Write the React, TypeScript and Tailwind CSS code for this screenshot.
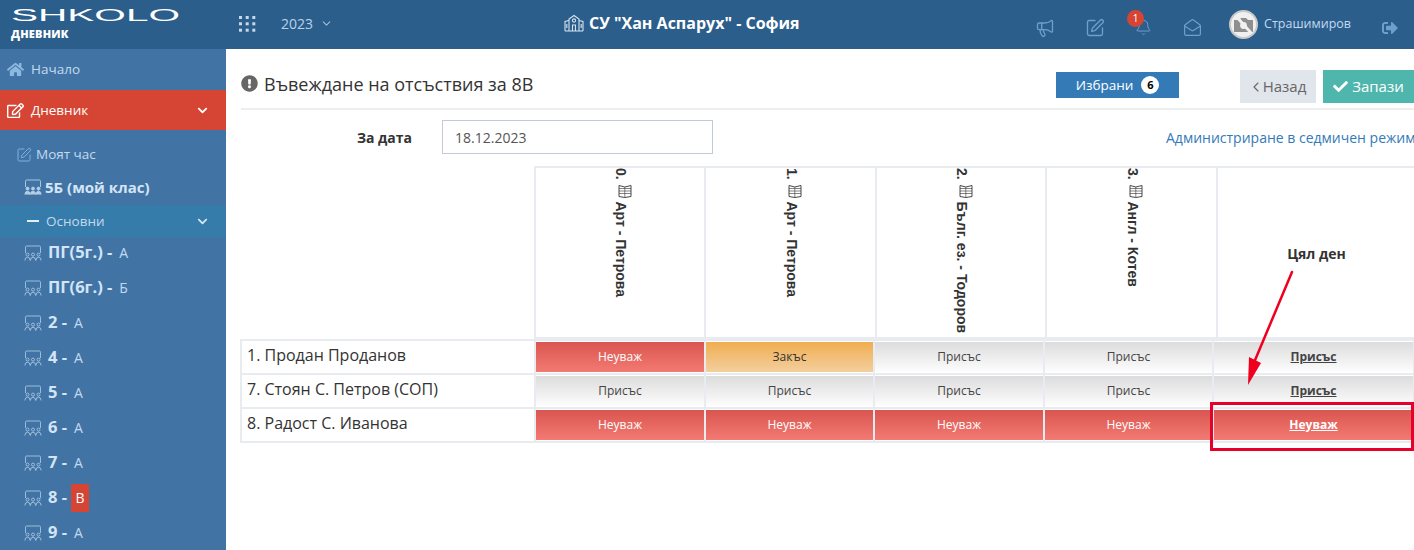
import { Bell, ChevronDown, ChevronLeft, MailOpen, Megaphone, SquarePen } from 'lucide-react';
import { FaCheck, FaChevronDown, FaExclamationCircle, FaHome, FaRegEdit, FaSignOutAlt } from 'react-icons/fa';

type Status = 'absent' | 'late' | 'present';

const classes = [
  { name: 'ПГ(5г.) -', letter: 'А' },
  { name: 'ПГ(6г.) -', letter: 'Б' },
  { name: '2 -', letter: 'А' },
  { name: '4 -', letter: 'А' },
  { name: '5 -', letter: 'А' },
  { name: '6 -', letter: 'А' },
  { name: '7 -', letter: 'А' },
  { name: '8 -', letter: 'В', active: true },
  { name: '9 -', letter: 'А' },
];

const lessons = [
  { num: '0.', label: 'Арт - Петрова' },
  { num: '1.', label: 'Арт - Петрова' },
  { num: '2.', label: 'Бълг. ез. - Тодоров' },
  { num: '3.', label: 'Англ - Котев' },
];

const students: { name: string; marks: Status[] }[] = [
  { name: '1. Продан Проданов', marks: ['absent', 'late', 'present', 'present', 'present'] },
  { name: '7. Стоян С. Петров (СОП)', marks: ['present', 'present', 'present', 'present', 'present'] },
  { name: '8. Радост С. Иванова', marks: ['absent', 'absent', 'absent', 'absent', 'absent'] },
];

const statusLabel: Record<Status, string> = { absent: 'Неуваж', late: 'Закъс', present: 'Присъс' };

const statusStyle: Record<Status, string> = {
  absent: 'bg-gradient-to-b from-[#da5550] to-[#f27a72] text-white',
  late: 'bg-gradient-to-b from-[#f0ad4e] to-[#f3cf9c] text-[#333]',
  present: 'bg-gradient-to-b from-[#dcdcdc] to-[#fdfdfd] text-[#444]',
};

function RoomIcon({ solid }: { solid?: boolean }) {
  return (
    <svg width="18" height="16" viewBox="0 0 18 16" fill="none" stroke="currentColor" strokeWidth="0.9" className="shrink-0 opacity-80">
      <path d="M1.5 8V2.2Q1.5 1 2.7 1H15.3Q16.5 1 16.5 2.2V8" />
      {[3.5, 9, 14.5].map((x) => (
        <g key={x} fill={solid ? 'currentColor' : 'none'}>
          <circle cx={x} cy="9.6" r="1.5" />
          <path d={`M${x - 2.6} 15.5Q${x - 2.6} 12.2 ${x} 12.2Q${x + 2.6} 12.2 ${x + 2.6} 15.5`} />
        </g>
      ))}
    </svg>
  );
}

function BookIcon() {
  return (
    <svg width="14" height="14" viewBox="0 0 14 14" fill="none" stroke="#333" strokeWidth="0.9" className="inline-block my-[3px]">
      <path d="M1 1.5L6.8 3L13 1.5V12.5L6.8 13.5L1 12.5Z" />
      <path d="M1 4.5H13M1 7H13M1 9.5H13M6.8 3V13.5" strokeWidth="0.6" />
    </svg>
  );
}

function Header() {
  return (
    <header className="h-[49px] bg-[#2c5e8c] flex items-center shrink-0 relative">
      <div className="w-[226px] shrink-0 pl-[11px] text-white">
        <svg width="170" height="22" viewBox="0 0 170 22" className="block mt-[-5px]">
          <text x="0" y="17" fontSize="17" fill="#fff" textLength="169" lengthAdjust="spacingAndGlyphs" fontFamily="'Liberation Sans', sans-serif">SHKOLO</text>
        </svg>
        <div className="text-[11px] leading-[12px] font-extrabold mt-[2px] tracking-[0.2px]">ДНЕВНИК</div>
      </div>
      <svg width="18" height="18" viewBox="0 0 18 18" fill="#c6d9ec" className="ml-[12px] shrink-0 mt-[-1px]">
        {[1.5, 8.2, 14.8].map((x) => [1.5, 7.8, 14.2].map((y) => <rect key={`${x}-${y}`} x={x - 0.5} y={y - 0.5} width="3" height="3" />))}
      </svg>
      <span className="ml-[25px] text-[14px] text-[#b9d2ea] mt-[-2px]">2023</span>
      <ChevronDown size={13} className="ml-[7px] text-[#9fbdd9] mt-[-2px]" />
      <div className="absolute left-[564px] top-[13px] flex items-center text-white font-bold text-[16px] leading-[20px]">
        <svg width="20" height="18" viewBox="0 0 20 18" fill="none" stroke="#d5e3f0" strokeWidth="1.1" className="mr-[5px]">
          <path d="M1 17V7.5L5 6.5M19 17V7.5L15 6.5M5 17V5L10 1.5L15 5V17M1 17H19" />
          <circle cx="10" cy="6.5" r="1.6" />
          <path d="M8.5 17V11H11.5V17M2.8 10V14M17.2 10V14" />
        </svg>
        СУ "Хан Аспарух" - София
      </div>
      <div className="ml-auto flex items-center text-[#6f9fcb]">
        <Megaphone size={20} strokeWidth={1.6} className="mr-[30px] mt-[6px]" />
        <SquarePen size={20} strokeWidth={1.6} className="mr-[30px] mt-[6px]" />
        <div className="relative mr-[31px] mt-[6px]">
          <Bell size={17} strokeWidth={1.4} />
          <span className="absolute left-[-8px] top-[-9px] w-[17px] h-[17px] rounded-full bg-[#d64533] text-white text-[10px] leading-[17px] text-center">1</span>
        </div>
        <MailOpen size={19} strokeWidth={1.5} className="mr-[27px] mt-[6px]" />
        <div className="w-[29px] h-[29px] rounded-full bg-[#f0f0f0] border-2 border-[#c9c9c9] flex items-center justify-center mr-[6px] overflow-hidden relative">
          <svg width="21" height="19" viewBox="0 0 21 19">
            <path d="M1 5H6L8 3H13L15 5H20V17H1Z" fill="#8f8f8f" />
            <circle cx="10.5" cy="10.5" r="3.4" fill="#f0f0f0" />
            <path d="M2 0L19 19" stroke="#f0f0f0" strokeWidth="3" />
          </svg>
        </div>
        <span className="text-[12.5px] text-[#c3d9ef] mr-[31px]">Страшимиров</span>
        <FaSignOutAlt size={16} className="mr-[16px] mt-[6px]" />
      </div>
    </header>
  );
}

function Sidebar() {
  return (
    <aside className="w-[226px] shrink-0 bg-[#4174a5] text-[#c3d9ef] text-[13.5px]">
      <div className="h-[41px] flex items-center pl-[7px]">
        <FaHome size={17} className="text-[#8db8e0] mr-[7px]" />
        Начало
      </div>
      <div className="h-[40px] bg-[#d64533] text-white flex items-center pl-[7px] pr-[18px]">
        <FaRegEdit size={17} className="mr-[7px]" />
        Дневник
        <FaChevronDown size={11} className="ml-auto" />
      </div>
      <div className="h-[48px] flex items-center pl-[16px] pt-[1px]">
        <SquarePen size={16} strokeWidth={1.3} className="text-[#8db8e0] mr-[4px]" />
        Моят час
      </div>
      <div className="h-[27px] flex items-center pl-[24px] pb-[9px] font-bold text-[#d3e5f7] text-[15px]">
        <RoomIcon solid />
        <span className="ml-[3px]">5Б (мой клас)</span>
      </div>
      <div className="h-[32px] bg-[#357cab] flex items-center pl-[27px] pr-[18px]">
        <span className="w-[12px] h-[2.5px] bg-[#e4eef8] mr-[7px]" />
        Основни
        <FaChevronDown size={11} className="ml-auto text-[#d3e5f7]" />
      </div>
      <div className="mt-[-2px]">
        {classes.map((c, i) => (
          <div key={i} className="h-[35px] flex items-center pl-[24px]">
            <RoomIcon />
            <span className="ml-[6px] font-bold text-[16.5px] text-[#d3e5f7] whitespace-nowrap">{c.name}</span>
            <span className={`text-[14px] ${c.active ? 'bg-[#d64533] text-white w-[18px] h-[28px] leading-[28px] text-center ml-[4px]' : 'ml-[7px]'}`}>{c.letter}</span>
          </div>
        ))}
      </div>
    </aside>
  );
}

function Attendance() {
  return (
    <div className="ml-[-1px]">
      <table className="border-collapse table-fixed ml-[294px] w-[882px]">
        <colgroup>
          <col className="w-[170px]" />
          <col className="w-[171px]" />
          <col className="w-[170px]" />
          <col className="w-[171px]" />
          <col className="w-[200px]" />
        </colgroup>
        <tbody>
          <tr>
            {lessons.map((l) => (
              <td key={l.num} className="h-[171px] border-2 border-[#e8ecf1] p-0 align-top">
                <div className="flex justify-center pl-[8px]">
                  <span className="[writing-mode:vertical-rl] font-['Liberation_Sans',sans-serif] font-bold text-[14px] leading-[16px] text-[#333] whitespace-nowrap">
                    {l.num} <BookIcon /> {l.label}
                  </span>
                </div>
              </td>
            ))}
            <td className="h-[171px] border-2 border-[#e8ecf1] border-r-0 p-0 text-center font-bold text-[14px] text-[#333]">
              <span className="relative top-[1px] left-[-1px]">Цял ден</span>
            </td>
          </tr>
        </tbody>
      </table>
      <table className="border-collapse table-fixed w-[1173px]">
        <colgroup>
          <col className="w-[294px]" />
          <col className="w-[170px]" />
          <col className="w-[169px]" />
          <col className="w-[170px]" />
          <col className="w-[169px]" />
          <col className="w-[201px]" />
        </colgroup>
        <tbody>
          {students.map((s) => (
            <tr key={s.name}>
              <td className="h-[34px] border-2 border-[#e8ecf1] pl-[5px] text-[16px] text-[#333] whitespace-nowrap">
                <span className="relative top-[-2px]">{s.name}</span>
              </td>
              {s.marks.map((m, i) => (
                <td key={i} className="h-[34px] border-2 border-[#e8ecf1] p-0">
                  <div className={`h-[30px] flex items-center justify-center text-[12px] ${statusStyle[m]} ${i === 4 ? 'font-bold underline' : ''}`}>
                    {statusLabel[m]}
                  </div>
                </td>
              ))}
            </tr>
          ))}
        </tbody>
      </table>
    </div>
  );
}

export default function App() {
  return (
    <div className="w-[1414px] h-[550px] overflow-hidden flex flex-col bg-white font-['Open_Sans',sans-serif] relative">
      <Header />
      <div className="flex flex-1 min-h-0">
        <Sidebar />
        <main className="flex-1 min-w-0 pl-[15px] overflow-hidden">
          <div className="h-[61px] border-b-2 border-[#eeeeee] flex items-start pt-[21px]">
            <FaExclamationCircle size={17} className="text-[#666] mt-[5px] mr-[6px]" />
            <h1 className="text-[18px] leading-[28px] text-[#333] font-normal">Въвеждане на отсъствия за 8В</h1>
            <div className="ml-auto mt-[2px] w-[123px] h-[26px] bg-[#337ab7] text-white text-[13.5px] flex items-center justify-center mr-[61px]">
              Избрани
              <span className="ml-[8px] w-[18px] h-[18px] rounded-full bg-white text-black text-[11px] font-bold text-center leading-[18px]">6</span>
            </div>
            <div className="w-[76px] h-[33px] bg-[#e1e5ec] text-[#666] text-[15px] flex items-center justify-center mr-[7px]">
              <ChevronLeft size={16} strokeWidth={1.6} className="mr-[-1px] ml-[-2px]" />
              Назад
            </div>
            <div className="w-[91px] h-[33px] bg-[#4fb6ad] text-white text-[15px] flex items-center justify-center">
              <FaCheck size={15} className="mr-[4px]" />
              Запази
            </div>
          </div>
          <div className="flex items-center h-[34px] mt-[10px] mb-[12px]">
            <label className="w-[171px] shrink-0 text-right font-bold text-[14px] text-[#333]">За дата</label>
            <div className="ml-[30px] w-[271px] shrink-0 h-[34px] border border-[#c2cad8] text-[14px] text-[#555] flex items-center pl-[12px]">18.12.2023</div>
            <a className="ml-[453px] shrink-0 whitespace-nowrap text-[14px] text-[#337ab7]">Администриране в седмичен режим</a>
          </div>
          <Attendance />
        </main>
      </div>
      <svg width="70" height="130" viewBox="0 0 70 130" fill="none" className="absolute left-[1235px] top-[265px]">
        <path d="M57 7L18 100" stroke="#f0001f" strokeWidth="2.5" strokeLinecap="round" />
        <path d="M13 120L14 92L26 98Z" fill="#f0001f" />
      </svg>
      <div className="absolute left-[1210px] top-[402px] w-[204px] h-[49px] border-[3px] border-[#e8002b]" />
    </div>
  );
}
